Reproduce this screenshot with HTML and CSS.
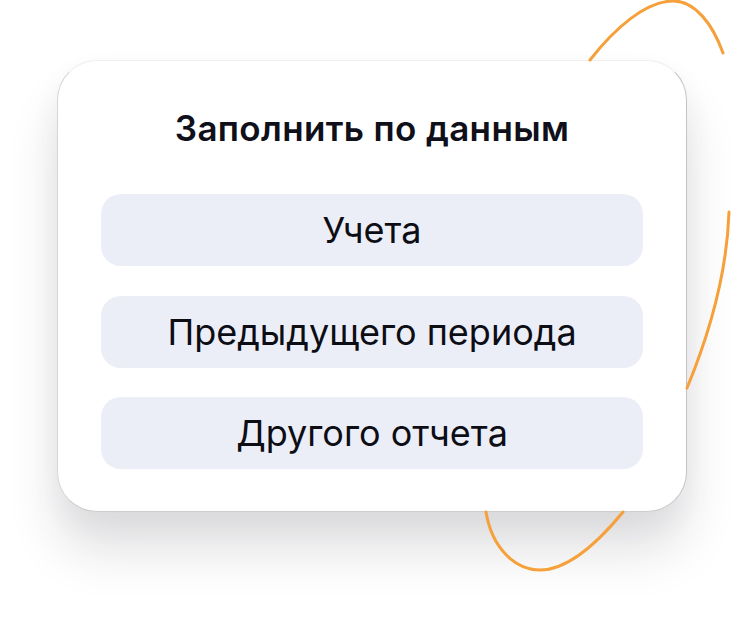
FILE: index.html
```html
<!DOCTYPE html>
<html lang="ru">
<head>
<meta charset="utf-8">
<title>Заполнить по данным</title>
<link rel="stylesheet" href="styles.css">
</head>
<body>
<div class="stage">
  <div class="card">
    <h1 class="title">Заполнить по данным</h1>
    <div class="options">
      <button class="option">Учета</button>
      <button class="option">Предыдущего периода</button>
      <button class="option">Другого отчета</button>
    </div>
  </div>
  <svg class="orbit" width="744" height="628" viewBox="0 0 744 628" aria-hidden="true">
    <path d="M590 60 C615 28 645 2 672 1 C695 0 713 25 723 53"/>
    <path d="M729 212 C727 272 711 330 687 388"/>
    <path d="M486 512 C492 548 515 570 540 570 C570 570 600 540 623 512"/>
  </svg>
</div>
</body>
</html>
```
FILE: styles.css
```css
html, body {
  margin: 0;
  padding: 0;
  background: #ffffff;
}
.stage {
  position: relative;
  width: 744px;
  height: 628px;
  overflow: hidden;
  padding: 60px 0 0 57px;
  box-sizing: border-box;
  font-family: Inter, "Noto Sans", sans-serif;
}
.card {
  width: 630px;
  box-sizing: border-box;
  padding: 47px 43px 42px;
  background: #ffffff;
  border: 1px solid;
  border-color: #efefef #c4c4c4 #cdcdcd #d6d6d6;
  border-radius: 40px;
  box-shadow: 0 40px 50px rgba(30, 30, 50, 0.13), 0 12px 30px rgba(30, 30, 50, 0.05);
}
.title {
  margin: 0 0 46px;
  font-size: 35px;
  line-height: 40px;
  font-weight: 600;
  letter-spacing: 0.35px;
  color: #10101a;
  text-align: center;
}
.options {
  display: flex;
  flex-direction: column;
  gap: 29.5px;
}
.option {
  height: 72px;
  border: none;
  border-radius: 20px;
  background: #eceef7;
  font-family: Inter, "Noto Sans", sans-serif;
  font-size: 36px;
  font-weight: 400;
  color: #0d0d15;
  padding: 0;
  cursor: pointer;
}
.orbit {
  position: absolute;
  left: 0;
  top: 0;
  pointer-events: none;
}
.orbit path {
  fill: none;
  stroke: #f5a03a;
  stroke-width: 3;
  stroke-linecap: round;
}
```
